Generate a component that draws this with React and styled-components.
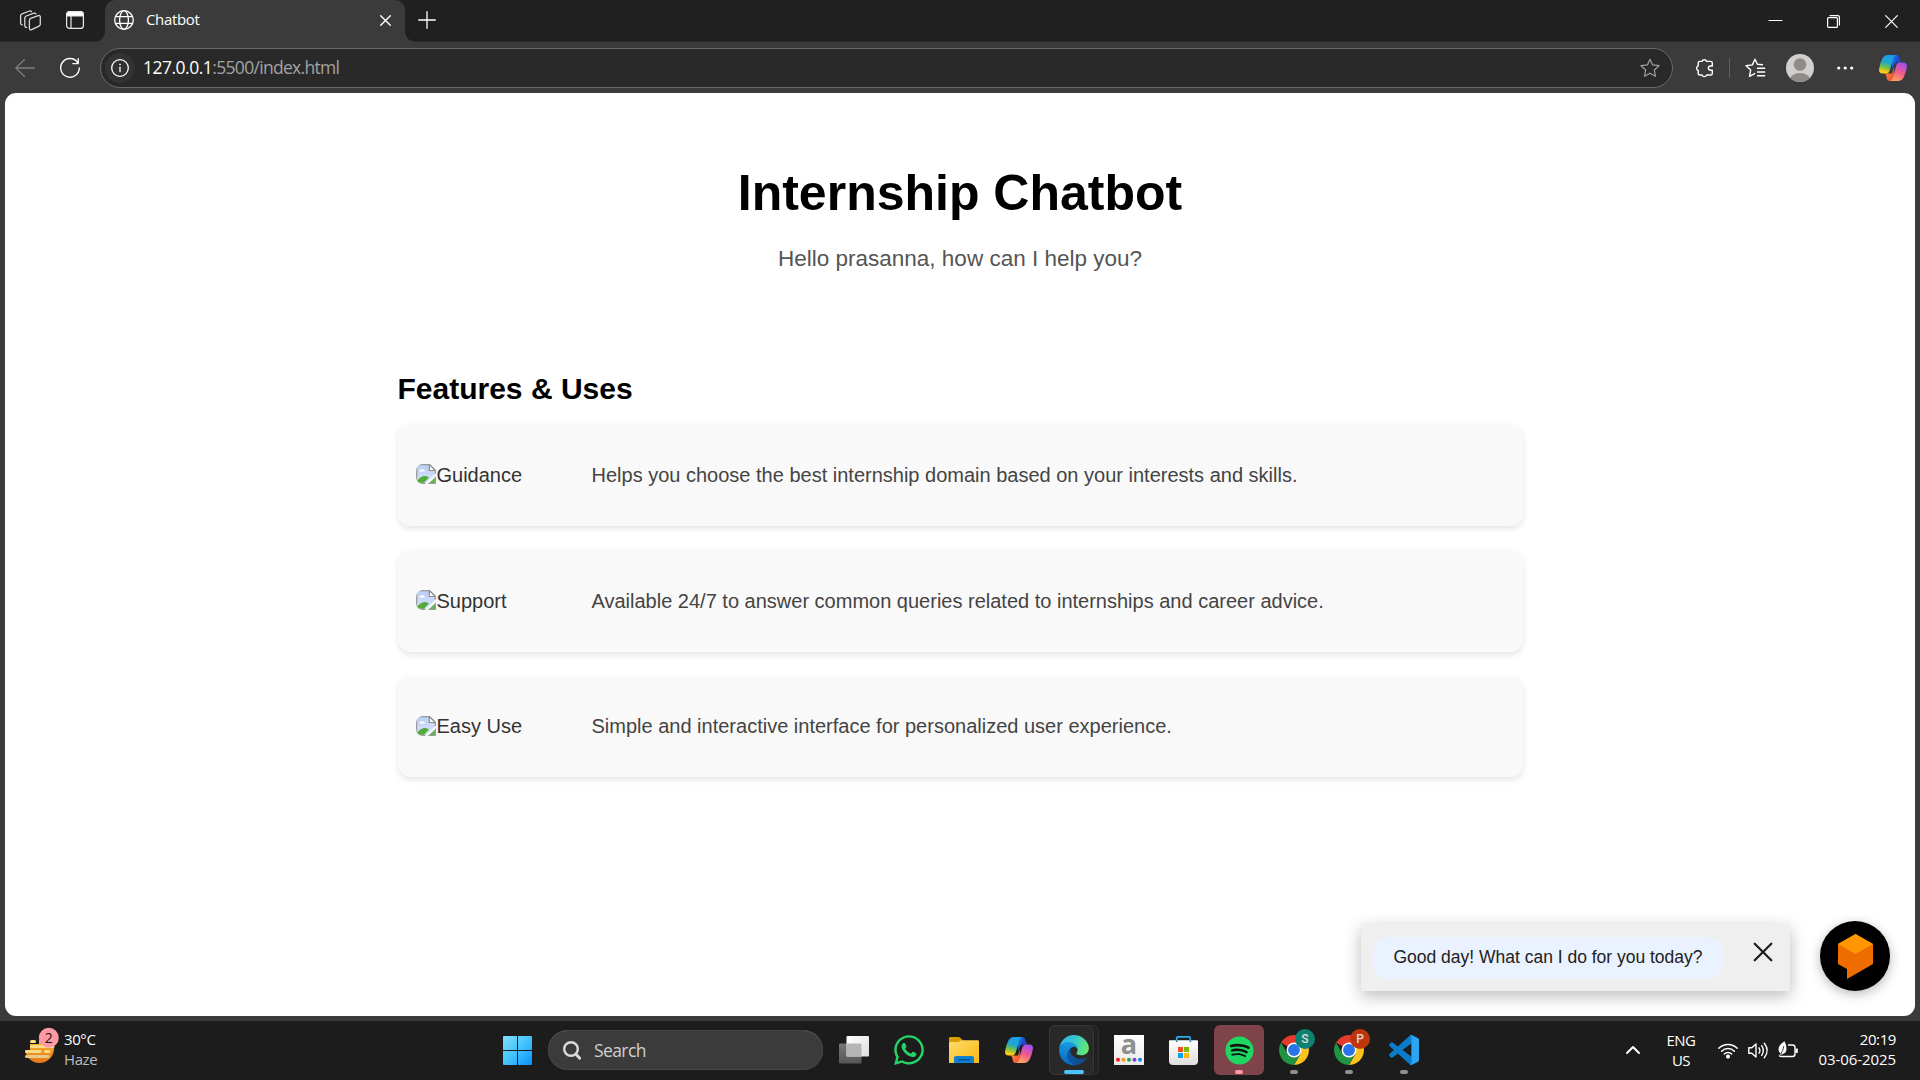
import React from 'react';
import styled, { createGlobalStyle } from 'styled-components';
import { FaWhatsapp, FaSpotify } from 'react-icons/fa';

const GlobalStyle = createGlobalStyle`
  * { box-sizing: border-box; }
  html, body { margin: 0; padding: 0; overflow: hidden; background: #3b3b3b; }
  svg { display: block; flex: none; overflow: visible; }
  h1, h2, p { margin: 0; }
`;

const arial = '"Liberation Sans", Arial, sans-serif';
const segoe = '"Open Sans", "Noto Sans", sans-serif';

const Screen = styled.div`
  width: 1920px;
  height: 1080px;
  display: flex;
  flex-direction: column;
  background: #3b3b3b;
  overflow: hidden;
`;

/* ---------- browser chrome ---------- */

const TabStrip = styled.header`
  height: 42px;
  flex: none;
  display: flex;
  background: #202020;
  box-shadow: inset 0 -1px 0 #2b2b2b;
`;

const StripTools = styled.div`
  width: 105px;
  display: flex;
  align-items: flex-start;
  gap: 25px;
  padding: 10px 0 0 20px;
`;

const Tab = styled.div`
  position: relative;
  width: 300px;
  height: 42px;
  display: flex;
  align-items: center;
  padding: 0 14px 2px 9px;
  background: #3b3b3b;
  border-radius: 10px 10px 0 0;

  &::before, &::after {
    content: '';
    position: absolute;
    bottom: 0;
    width: 10px;
    height: 10px;
  }
  &::before {
    left: -10px;
    background: radial-gradient(circle at 0 0, transparent 9.5px, #3b3b3b 10px);
  }
  &::after {
    right: -10px;
    background: radial-gradient(circle at 100% 0, transparent 9.5px, #3b3b3b 10px);
  }
`;

const TabTitle = styled.span`
  flex: 1;
  margin-left: 12px;
  padding-bottom: 2px;
  font: 400 15px/20px ${segoe};
  letter-spacing: -0.35px;
  color: #fff;
`;

const NewTab = styled.div`
  padding: 11px 0 0 13px;
`;

const WindowControls = styled.div`
  margin-left: auto;
  display: flex;
  gap: 45px;
  padding: 15px 22px 0 0;
`;

const Toolbar = styled.div`
  height: 51px;
  flex: none;
  display: flex;
  align-items: center;
  padding: 0 13px 0 15px;
`;

const NavButtons = styled.div`
  width: 85px;
  display: flex;
  gap: 25px;
`;

const AddressBar = styled.div`
  width: 1573px;
  height: 40px;
  display: flex;
  align-items: center;
  padding: 0 12px 0 4px;
  border: 1px solid #6a6a6a;
  border-radius: 20px;
  background: #292929;
`;

const SiteInfo = styled.div`
  width: 30px;
  height: 30px;
  display: grid;
  place-items: center;
  border-radius: 50%;
  background: #333;
`;

const Url = styled.span`
  flex: 1;
  margin-left: 8px;
  padding-bottom: 1px;
  font: 400 17.5px/24px ${segoe};
  letter-spacing: -0.7px;
  color: #a3a3a3;
  b { font-weight: 400; color: #fff; letter-spacing: -0.5px; }
`;

const ToolbarActions = styled.div`
  margin-left: auto;
  display: flex;
  align-items: center;
`;

const Divider = styled.i`
  width: 1px;
  height: 20px;
  margin: 0 15px 0 16px;
  background: #616161;
`;

/* ---------- page ---------- */

const Page = styled.main`
  position: relative;
  width: 1910px;
  height: 923px;
  flex: none;
  margin: 0 5px;
  background: #fff;
  border-radius: 11px;
  overflow: hidden;
  font-family: ${arial};
`;

const Hero = styled.section`
  display: flex;
  flex-direction: column;
  align-items: center;
  padding-top: 72px;
`;

const Title = styled.h1`
  font-size: 50px;
  line-height: 57px;
  color: #000;
`;

const Greeting = styled.p`
  margin-top: 24px;
  font-size: 22.5px;
  line-height: 26px;
  color: #555;
`;

const Features = styled.section`
  width: 1125px;
  margin: 100px auto 0;
`;

const FeaturesTitle = styled.h2`
  font-size: 30px;
  line-height: 34px;
  color: #000;
`;

const CardList = styled.div`
  display: flex;
  flex-direction: column;
  gap: 25px;
  margin-top: 19px;
`;

const Card = styled.article`
  height: 100.8px;
  display: flex;
  align-items: center;
  padding: 0 18.5px;
  background: #f9f9f9;
  border-radius: 12.5px;
  box-shadow: 0 2.5px 6.25px rgba(0, 0, 0, 0.1);
  font-size: 20px;
  line-height: 23px;
`;

const MissingImage = styled.div`
  width: 175.5px;
  display: flex;
  align-items: center;
  gap: 0.5px;
  color: #333;
  svg { margin-bottom: 2px; }
`;

const CardText = styled.p`
  color: #444;
`;

const ChatWidget = styled.aside`
  position: absolute;
  right: 25px;
  bottom: 25px;
  display: flex;
  align-items: flex-end;
  gap: 30px;
`;

const ChatPopup = styled.div`
  width: 429px;
  height: 67px;
  display: flex;
  padding: 13px 18px 12px 12px;
  background: #efefef;
  box-shadow: 0 5px 16px rgba(0, 0, 0, 0.27);
`;

const ChatMessage = styled.div`
  width: 350px;
  height: 42px;
  padding: 0 20.5px;
  border-radius: 15px;
  background: #eaf1ff;
  font-size: 17.5px;
  line-height: 40px;
  letter-spacing: -0.01px;
  white-space: nowrap;
  color: #212121;
`;

const ChatClose = styled.div`
  margin: 6px 0 0 auto;
`;

const ChatBubble = styled.div`
  width: 70px;
  height: 70px;
  border-radius: 50%;
  background: #000;
  box-shadow: 0 3px 12px rgba(0, 0, 0, 0.28);
`;

/* ---------- taskbar ---------- */

const Taskbar = styled.footer`
  height: 59px;
  flex: none;
  margin-top: 5px;
  padding-bottom: 1px;
  display: flex;
  align-items: center;
  background: #1c1c1c;
`;

const Weather = styled.div`
  width: 493px;
  height: 58px;
  display: flex;
  padding: 7px 0 0 25px;
  font: 400 15px/20px ${segoe};
  color: #fff;
`;

const WeatherIcon = styled.div`
  width: 39px;
`;

const WeatherText = styled.div`
  padding-top: 1px;
  letter-spacing: -0.4px;
  span { display: block; color: #bdbdbd; }
`;

const Apps = styled.div`
  display: flex;
  align-items: center;
  gap: 5px;
`;

const AppCell = styled.div`
  position: relative;
  width: 50px;
  height: 50px;
  display: grid;
  place-items: center;
  padding-right: ${p => (p.$nudge ? 1 : 0)}px;
  border-radius: 6px;
  background: ${p => p.$bg || 'transparent'};
  svg { grid-area: 1 / 1; position: relative; }

  &::after {
    content: '';
    display: ${p => (p.$bar ? 'block' : 'none')};
    position: absolute;
    bottom: 1px;
    left: 50%;
    width: ${p => p.$barWidth || 8}px;
    height: 4px;
    transform: translateX(-50%);
    border-radius: 2px;
    background: ${p => p.$bar};
  }
`;

const StackedCell = styled(AppCell)`
  box-shadow: inset 0 0 0 1px #303030;

  &::before {
    content: '';
    position: absolute;
    inset: 0 5px 0 0;
    border: 1px solid #383838;
    border-radius: 6px;
    background: #292929;
    box-shadow: 1px 0 0 #1c1c1c;
  }
`;

const SearchBox = styled.div`
  width: 275px;
  height: 40px;
  display: flex;
  align-items: center;
  gap: 13px;
  margin-right: 1px;
  padding-left: 15px;
  border-radius: 20px;
  background: #3b3b3b;
  box-shadow: inset 0 0 0 1px #464646, inset 0 1px 0 #5c5c5c;
`;

const SearchText = styled.span`
  padding-bottom: 1px;
  font: 400 17.5px/24px ${segoe};
  letter-spacing: -0.6px;
  color: #d0d0d0;
`;

const Badge = styled.span`
  position: absolute;
  left: 26px;
  top: 4px;
  width: 20px;
  height: 20px;
  border-radius: 50%;
  background: ${p => p.$bg};
  color: #e6d9d5;
  font: 500 12px/20px Roboto, sans-serif;
  text-align: center;
`;

const Tray = styled.div`
  margin-left: auto;
  display: flex;
  align-items: center;
  padding-right: 24px;
  font: 400 15px/20px ${segoe};
  letter-spacing: -0.5px;
  color: #fff;
`;

const Language = styled.div`
  width: 40px;
  margin: 0 17px 0 21px;
  text-align: center;
`;

const Status = styled.div`
  display: flex;
  gap: 10px;
`;

const Clock = styled.div`
  width: 98px;
  padding-bottom: 2px;
  text-align: right;
  white-space: nowrap;
  letter-spacing: -0.4px;
  span { display: block; letter-spacing: -0.08px; }
`;

/* ---------- icons ---------- */

const Line = ({ w, h = w, box, color = '#fff', sw = 1.3, children }) => (
  <svg width={w} height={h} viewBox={box || `0 0 ${w} ${h}`} fill="none" stroke={color}
    strokeWidth={sw} strokeLinecap="round" strokeLinejoin="round">{children}</svg>
);

const WorkspacesIcon = () => (
  <Line w={21} color="#d8d8d8" sw={1.3}>
    <path d="M10.6 8.4 18.3 5.6Q20.3 5.1 20.3 7V14.3Q20.2 15.6 19 16.1L11.6 19.6Q9.5 20.3 9.4 18.3V10.3Q9.5 8.9 10.6 8.4Z" />
    <path d="M6.7 17.4Q4.8 17.5 4.8 15.6V8.1Q4.9 6.6 6.2 6L13.9 3.1Q15.5 2.8 15.9 4" />
    <path d="M2.3 14.9Q.6 14.7.6 13V5.7Q.7 4.3 2 3.8L9.5 1Q10.9.6 11.5 1.7" />
  </Line>
);

const SideTabsIcon = () => (
  <Line w={18} h={20} sw={1.2} color="#e8e8e8">
    <rect x=".6" y="1.6" width="16.8" height="16.8" rx="3" />
    <path d="M.6 6V4.6a3 3 0 0 1 3-3h10.800a3 3 0 0 1 3 3V6Z" fill="#fff" />
    <path d="M5 6v12.400" />
  </Line>
);

const GlobeIcon = () => (
  <Line w={20} sw={1.3}>
    <circle cx="10" cy="10" r="9.300" />
    <ellipse cx="10" cy="10" rx="4.400" ry="9.300" />
    <path d="M1.600 6.700h16.800M1.600 13.300h16.800" />
  </Line>
);

const Cross = ({ s, sw, color }) => (
  <Line w={s} sw={sw} color={color}><path d={`M.7.7 ${s - 0.7} ${s - 0.7}M${s - 0.7} .7.7 ${s - 0.7}`} /></Line>
);

const StarPath = 'M10 1.200 12.600 6.900 19 7.700 14.300 12 15.500 18.300 10 15.200 4.500 18.300 5.700 12 1 7.700 7.400 6.900Z';

const CopilotIcon = ({ id, w = 28 }) => (
  <svg width={w} height={(w * 26) / 28} viewBox="0 0 28 26">
    <defs>
      <linearGradient id={`${id}a`} x1=".5" y1="0" x2=".25" y2="1">
        <stop offset="0" stopColor="#1b9df0" /><stop offset=".4" stopColor="#22a7c8" />
        <stop offset=".65" stopColor="#6fc04a" /><stop offset=".9" stopColor="#ffc91a" />
      </linearGradient>
      <linearGradient id={`${id}b`} x1=".7" y1="0" x2=".3" y2="1">
        <stop offset="0" stopColor="#a04df2" /><stop offset=".5" stopColor="#f0588f" />
        <stop offset="1" stopColor="#ffa85c" />
      </linearGradient>
      <linearGradient id={`${id}c`} x1="0" y1="0" x2="1" y2=".6">
        <stop offset="0" stopColor="#1a8ae8" /><stop offset=".6" stopColor="#1b46d2" /><stop offset="1" stopColor="#2560ea" />
      </linearGradient>
      <linearGradient id={`${id}d`} x1="0" y1="0" x2="1" y2="1">
        <stop offset="0" stopColor="#ff9d2c" /><stop offset="1" stopColor="#f0483c" />
      </linearGradient>
    </defs>
    <path d="M13 0H17Q19.600 0 20.400 3L21.200 6.200Q21.700 7.300 23 7.400H18Q15.500 7.400 14.600 10L13 14Z" fill={`url(#${id}c)`} />
    <path d="M8 18.500H13L15 12 14.500 22Q13.500 26 10.500 26Q8.400 26 7.800 23.500L7.200 20.500Q6.800 18.800 5 18.500Z" fill={`url(#${id}d)`} />
    <path d="M9 0H17Q15.200.3 14.400 3L10.700 15.500Q9.700 18.600 6.900 18.600H3.500Q-.6 18.400.2 13.500Q1 8 3.700 3Q5.500 0 9 0Z" fill={`url(#${id}a)`} />
    <path d="M19 26H10.800Q13 25.600 13.800 22.900L17.300 10.500Q18.300 7.400 21 7.400H24.500Q28.600 7.600 27.800 12.500Q27 18 24.300 23Q22.500 26 19 26Z" fill={`url(#${id}b)`} />
  </svg>
);

const BrokenImage = () => (
  <svg width="20" height="20" viewBox="0 0 20 20">
    <defs>
      <clipPath id="rounded"><rect width="20" height="20" rx="7" /></clipPath>
      <linearGradient id="sky" x2="0" y2="1"><stop stopColor="#b9cdf5" /><stop offset="1" stopColor="#dbe6fc" /></linearGradient>
    </defs>
    <g clipPath="url(#rounded)">
      <path d="M.6.6H13.500L19.400 6.400V19.400H.6Z" fill="url(#sky)" stroke="#9a9a9a" strokeWidth="1.300" />
      <path d="M3 7.500Q4 5 6 5.500Q8 4.500 9 7.500Z" fill="#fff" />
      <path d="M1.300 18.800V16.500Q5 11.800 9 12Q11.500 12 13 13.500L8 18.800Z" fill="#55ab3c" />
      <path d="M13.300.6V6.500H19.400Z" fill="#fff" stroke="#8d8d8d" strokeWidth="1.200" />
    </g>
    <path d="M8.800 20 20 9.300V12.200L12 20Z" fill="#f9f9f9" />
    <path d="M12.500 19.500H19.500V13.200Z" fill="#6fae5d" />
    <path d="M12.500 19.500H19.500V13.200" fill="none" stroke="#9a9a9a" />
  </svg>
);

const ChatLogo = () => (
  <svg width="70" height="70" viewBox="0 0 70 70">
    <path d="M18 23 35.500 13 53 23V43L27 58V48L18 43Z" fill="#ef6c00" />
    <path d="M18 23 35.500 13 53 23 35.500 33Z" fill="#ff9800" />
  </svg>
);

const HazeIcon = () => (
  <svg width="36" height="40" viewBox="0 0 36 40">
    <defs><linearGradient id="sun" x2="0" y2="1"><stop stopColor="#ffcb2e" /><stop offset="1" stopColor="#e8731a" /></linearGradient></defs>
    <circle cx="14.500" cy="20.500" r="14.500" fill="url(#sun)" />
    <path d="M-1 4H18V12H14V16H0V21H-1Z" fill="#1c1c1c" />
    <path d="M-1 12H5V22H-1Z" fill="#1c1c1c" />
    <g stroke="#f6dc87" strokeWidth="3" strokeLinecap="round">
      <path d="M6.500 13.500H9.500" stroke="#ffe27a" /><path d="M6.500 18.500H28" />
      <path d="M1.500 23.500H15M20.500 23.500H24" /><path d="M1.500 28.500H23" stroke="#e6c98b" />
    </g>
    <circle cx="23.800" cy="9.800" r="10" fill="#ff99a4" />
    <text x="23.800" y="14.800" fontFamily="Open Sans, sans-serif" fontSize="14" textAnchor="middle" fill="#111">2</text>
  </svg>
);

const StartIcon = () => (
  <svg width="29" height="29" viewBox="0 0 29 29">
    <defs><linearGradient id="win" gradientUnits="userSpaceOnUse" x1="0" y1="0" x2="29" y2="29">
      <stop stopColor="#84defc" /><stop offset=".5" stopColor="#43c3fb" /><stop offset="1" stopColor="#0b8ffb" />
    </linearGradient></defs>
    <g fill="url(#win)">
      <path d="M1 0H14V14H0V1Q0 0 1 0Z" /><path d="M15 0H28Q29 0 29 1V14H15Z" />
      <path d="M0 15H14V29H1Q0 29 0 28Z" /><path d="M15 15H29V28Q29 29 28 29H15Z" />
    </g>
  </svg>
);

const TaskViewIcon = () => (
  <svg width="30" height="28" viewBox="0 0 30 28">
    <defs>
      <linearGradient id="tv" x2="1" y2="1"><stop stopColor="#fff" /><stop offset="1" stopColor="#dedede" /></linearGradient>
      <linearGradient id="tv2" x2="0" y2="1"><stop stopColor="#777" /><stop offset="1" stopColor="#565656" /></linearGradient>
    </defs>
    <rect y="7.500" width="22.500" height="20" rx="1" fill="url(#tv2)" />
    <rect x="7.500" width="22.500" height="20.500" rx="1" fill="url(#tv)" />
    <rect x="7.500" y="7.500" width="15" height="13" fill="#b5b5b5" />
  </svg>
);

const FolderIcon = () => (
  <svg width="30" height="26" viewBox="0 0 30 26">
    <defs><linearGradient id="fold" x2="1" y2="1"><stop stopColor="#ffdc6b" /><stop offset="1" stopColor="#fbb714" /></linearGradient></defs>
    <path d="M0 1.200Q0 0 1.200 0H9.500Q10.500 0 11.200.8L13.500 3V8H0Z" fill="#dd9d05" />
    <path d="M0 6Q0 5 1 5H8.500Q10 5 11 4.200L12.500 3.200H28.800Q30 3.200 30 4.400V26H0Z" fill="url(#fold)" />
    <path d="M5 26V21Q5 19 7 19H23Q25 19 25 21V26Z" fill="#0f7fce" />
    <path d="M9 22.700H21" stroke="#064f8b" strokeWidth="1.300" />
  </svg>
);

const EdgeIcon = () => (
  <svg width="30" height="30" viewBox="4.600 0 256 259">
    <defs>
      <linearGradient id="e1" x1="0" x2="1"><stop stopColor="#0c59a4" /><stop offset="1" stopColor="#114a8b" /></linearGradient>
      <linearGradient id="e2" x1=".5" y1="0" x2=".3" y2="1"><stop stopColor="#1b9de2" /><stop offset=".5" stopColor="#1383d3" /><stop offset="1" stopColor="#0a67c0" /></linearGradient>
      <linearGradient id="e3" x1="0" y1=".3" x2="1" y2=".6"><stop stopColor="#35b5ee" /><stop offset=".45" stopColor="#36c6cf" /><stop offset="1" stopColor="#66eb6e" /></linearGradient>
    </defs>
    <path fill="url(#e1)" d="M235.680 195.460a93.730 93.730 0 0 1-10.540 4.710 101.870 101.870 0 0 1-35.900 6.460c-47.320 0-88.540-32.550-88.540-74.320A31.480 31.480 0 0 1 117.130 105c-42.800 1.800-53.800 46.400-53.800 72.530 0 73.880 68.090 81.370 82.760 81.370 7.910 0 19.840-2.300 27-4.560l1.310-.44a128.340 128.340 0 0 0 66.600-52.800 4 4 0 0 0-5.320-5.640z" />
    <path fill="url(#e2)" d="M110.340 246.340A79.200 79.200 0 0 1 87.600 225a80.720 80.720 0 0 1 29.530-120c3.120-1.470 8.450-4.130 15.540-4a32.350 32.350 0 0 1 25.690 13 31.880 31.880 0 0 1 6.360 18.660c0-.21 24.460-79.600-80-79.600-43.900 0-80 41.660-80 78.210a130.150 130.150 0 0 0 12.110 56 128 128 0 0 0 156.380 67.110 75.550 75.550 0 0 1-62.780-8z" />
    <path fill="url(#e3)" d="M156.940 153.780c-.81 1.050-3.300 2.500-3.300 5.660 0 2.610 1.700 5.120 4.720 7.230 14.380 10 41.490 8.680 41.560 8.680a59.560 59.560 0 0 0 30.270-8.350 61.380 61.380 0 0 0 30.430-52.880c.26-22.410-8-37.310-11.340-43.910C228.090 28.760 182.350.2 132.610.2a128 128 0 0 0-128 126.200c.48-36.540 36.800-66.050 80-66.050 3.500 0 23.460.34 42 10.070 16.340 8.580 24.900 18.940 30.850 29.210 6.180 10.670 7.280 24.150 7.280 29.520s-2.740 13.330-7.800 19.830z" />
  </svg>
);

const AmazonIcon = () => (
  <svg width="30" height="30" viewBox="0 0 30 30">
    <defs><linearGradient id="amz" x2="0" y2="1"><stop stopColor="#fff" /><stop offset="1" stopColor="#e9e9e9" /></linearGradient></defs>
    <rect width="30" height="30" fill="url(#amz)" />
    <text x="15" y="19" textAnchor="middle" fontFamily="Open Sans, sans-serif" fontWeight="700" fontSize="27" fill="#8e8e8e">a</text>
    {['#f0141e', '#f79c1c', '#20a45c', '#8f35d8', '#1585ea'].map((c, i) => (
      <circle key={c} cx={4 + i * 5.500} cy="24.700" r="2" fill={c} />
    ))}
  </svg>
);

const StoreIcon = () => (
  <svg width="29" height="29" viewBox="0 0 29 29">
    <defs><linearGradient id="bag" x2="0" y2="1"><stop stopColor="#fff" /><stop offset="1" stopColor="#dedede" /></linearGradient></defs>
    <path d="M7.700 6V2Q7.700.8 8.900.8H20.100Q21.300.8 21.300 2V6" fill="none" stroke="#29aee6" strokeWidth="1.700" />
    <path d="M1 4.300H28Q29 4.300 29 5.300V25Q29 29 25 29H4Q0 29 0 25V5.300Q0 4.300 1 4.300Z" fill="url(#bag)" />
    <path d="M7.700 4.300V6M21.300 4.300V6" stroke="#1b7fb5" strokeWidth="1.700" />
    <path d="M9 11H14V16H9Z" fill="#f25022" /><path d="M15 11H20V16H15Z" fill="#7fba00" />
    <path d="M9 17H14V22H9Z" fill="#00a4ef" /><path d="M15 17H20V22H15Z" fill="#ffb900" />
  </svg>
);

const ChromeIcon = () => (
  <svg width="30" height="30" viewBox="0 0 48 48">
    <path d="M24 24 3.220 12A24 24 0 0 1 44.780 12Z" fill="#e33b2e" />
    <path d="M24 12H44.780A24 24 0 0 1 24 48L34.400 30Z" fill="#fcc31e" />
    <path d="M3.220 12A24 24 0 0 0 24 48L34.400 30 24 32 13.600 30Z" fill="#229342" />
    <circle cx="24" cy="24" r="12" fill="#fff" />
    <circle cx="24" cy="24" r="9.500" fill="#2b73e8" />
  </svg>
);

const VsCodeIcon = () => (
  <svg width="30" height="30" viewBox="0 0 24 24">
    <path fill="#0a7cc9" d="M23.150 2.587 18.210.21a1.494 1.494 0 0 0-1.705.29l-9.460 8.630-4.120-3.128a.999.999 0 0 0-1.276.057L.327 7.261A1 1 0 0 0 .326 8.740L3.899 12 .326 15.260a1 1 0 0 0 .001 1.479L1.650 17.940a.999.999 0 0 0 1.276.057l4.120-3.128 9.460 8.630a1.492 1.492 0 0 0 1.704.29l4.942-2.377A1.500 1.500 0 0 0 24 20.060V3.939a1.500 1.500 0 0 0-.85-1.352zm-5.146 14.861L10.826 12l7.178-5.448v10.896z" />
    <path fill="#2ba4f2" d="M23.150 2.587 18.210.21a1.494 1.494 0 0 0-1.300 0Q18 .8 18 2V22Q18 23.200 16.900 23.790a1.492 1.492 0 0 0 1.310 0l4.942-2.377A1.500 1.500 0 0 0 24 20.060V3.939a1.500 1.500 0 0 0-.85-1.352z" />
  </svg>
);

const cards = [
  ['Guidance', 'Helps you choose the best internship domain based on your interests and skills.'],
  ['Support', 'Available 24/7 to answer common queries related to internships and career advice.'],
  ['Easy Use', 'Simple and interactive interface for personalized user experience.'],
];

const Gap = styled.i`
  width: ${p => p.$w}px;
  flex: none;
`;

export default function App() {
  return (
    <Screen>
      <GlobalStyle />
      <TabStrip>
        <StripTools><WorkspacesIcon /><SideTabsIcon /></StripTools>
        <Tab>
          <GlobeIcon />
          <TabTitle>Chatbot</TabTitle>
          <Cross s={11} sw={1.4} />
        </Tab>
        <NewTab><Line w={18} sw={1.3}><path d="M9 .7V17.300M.7 9H17.300" /></Line></NewTab>
        <WindowControls>
          <Line w={13} sw={1}><path d="M0 5.500H13" /></Line>
          <Line w={13} sw={1.2}><rect x=".6" y="2.600" width="9.800" height="9.800" rx="1" /><path d="M3 .6H10.900Q12.400.6 12.400 2.100V10" /></Line>
          <Cross s={13} sw={1.2} />
        </WindowControls>
      </TabStrip>

      <Toolbar>
        <NavButtons>
          <Line w={20} color="#7d7d7d" sw={1.3}><path d="M19.500 10H.8M9.500 1.500.8 10 9.500 18.500" /></Line>
          <Line w={20} sw={1.4}><path d="M17.600 4.500A9.300 9.300 0 1 0 19.300 10M18.200.6V5.600H12.800" /></Line>
        </NavButtons>
        <AddressBar>
          <SiteInfo>
            <Line w={18} sw={1.3}><circle cx="9" cy="9" r="8.300" /><path d="M9 8.200V12.600" /><circle cx="9" cy="5.500" r=".5" fill="#fff" stroke="#fff" strokeWidth=".6" /></Line>
          </SiteInfo>
          <Url><b>127.0.0.1</b>:5500/index.html</Url>
          <Line w={20} color="#a0a0a0" sw={1.2}><path d={StarPath} /></Line>
        </AddressBar>
        <ToolbarActions>
          <Line w={18} h={20} sw={1.4}>
            <path d="M7 3.400A2.400 2.400 0 0 1 11.600 3.400H15.600Q17.300 3.400 17.300 5.100V8H15.500A2.100 2.100 0 0 0 15.500 12.200H17.300V15.400Q17.300 17 15.600 17H11.700A2.500 2.500 0 0 1 7 17H4.800Q3.200 17 3.200 15.400V12.500A2.500 2.500 0 0 1 3.200 7.800V5.100Q3.200 3.400 4.800 3.400Z" />
          </Line>
          <Divider />
          <Line w={20} sw={1.4}>
            <path d="M17.500 6.800 12.400 6.300 10 1.200 7.400 6.900 1 7.700 5.700 12 4.500 18.300 9.600 15.600M12.500 10.200H19.700M12.500 14H19.700M12.500 17.800H19.700" />
          </Line>
          <Gap $w={21} />
          <svg width="28" height="28" viewBox="0 0 28 28">
            <defs><clipPath id="head"><circle cx="14" cy="14" r="14" /></clipPath></defs>
            <circle cx="14" cy="14" r="14" fill="#d2d0ce" />
            <g clipPath="url(#head)" fill="#8f8b87"><circle cx="14" cy="10.500" r="6.300" /><ellipse cx="14" cy="26.500" rx="10.500" ry="7.500" /></g>
          </svg>
          <Gap $w={23} />
          <svg width="16" height="4" fill="#fff"><circle cx="1.700" cy="2" r="1.600" /><circle cx="8.200" cy="2" r="1.600" /><circle cx="14.700" cy="2" r="1.600" /></svg>
          <Gap $w={26} />
          <CopilotIcon id="top" />
        </ToolbarActions>
      </Toolbar>

      <Page>
        <Hero>
          <Title>Internship Chatbot</Title>
          <Greeting>Hello prasanna, how can I help you?</Greeting>
        </Hero>
        <Features>
          <FeaturesTitle>Features &amp; Uses</FeaturesTitle>
          <CardList>
            {cards.map(([alt, text]) => (
              <Card key={alt}>
                <MissingImage><BrokenImage />{alt}</MissingImage>
                <CardText>{text}</CardText>
              </Card>
            ))}
          </CardList>
        </Features>
        <ChatWidget>
          <ChatPopup>
            <ChatMessage>Good day! What can I do for you today?</ChatMessage>
            <ChatClose><Cross s={18} sw={2.2} color="#1c1c1c" /></ChatClose>
          </ChatPopup>
          <ChatBubble><ChatLogo /></ChatBubble>
        </ChatWidget>
      </Page>

      <Taskbar>
        <Weather>
          <WeatherIcon><HazeIcon /></WeatherIcon>
          <WeatherText>30°C<span>Haze</span></WeatherText>
        </Weather>
        <Apps>
          <AppCell $nudge><StartIcon /></AppCell>
          <SearchBox>
            <Line w={18} h={19} sw={2.4} color="#dcdcdc"><circle cx="8" cy="8" r="6.800" /><path d="M13 13.200 16.700 17.300" strokeWidth="2.800" /></Line>
            <SearchText>Search</SearchText>
          </SearchBox>
          <AppCell><TaskViewIcon /></AppCell>
          <AppCell><FaWhatsapp size={34} color="#25d366" /></AppCell>
          <AppCell><FolderIcon /></AppCell>
          <AppCell><CopilotIcon id="task" /></AppCell>
          <StackedCell $bg="#232323" $bar="#4cc2ff" $barWidth={20}><EdgeIcon /></StackedCell>
          <AppCell><AmazonIcon /></AppCell>
          <AppCell $nudge><StoreIcon /></AppCell>
          <AppCell $bg="#7f444a" $bar="#ff99a4">
            <svg width="24" height="24"><circle cx="12" cy="12" r="12" fill="#111" /></svg>
            <FaSpotify size={29} color="#1ed760" />
          </AppCell>
          <AppCell $bar="#8f8f8f"><ChromeIcon /><Badge $bg="#0b8272">S</Badge></AppCell>
          <AppCell $bar="#8f8f8f"><ChromeIcon /><Badge $bg="#bf360c">P</Badge></AppCell>
          <AppCell $bar="#8f8f8f"><VsCodeIcon /></AppCell>
        </Apps>
        <Tray>
          <Line w={14} h={8} sw={2}><path d="M1 7 7 1 13 7" /></Line>
          <Language>ENG<br />US</Language>
          <Status>
            <Line w={20} h={17} sw={1.5}>
              <path d="M.8 6.200A13 13 0 0 1 19.200 6.200M3.600 9.200A9 9 0 0 1 16.400 9.200M6.300 12A5.200 5.200 0 0 1 13.700 12" />
              <circle cx="10" cy="14.600" r="1.300" fill="#fff" />
            </Line>
            <Line w={20} h={17} sw={1.4}>
              <path d="M.8 5.800H3.800L8 2V15L3.800 11.300H.8ZM11 5.800Q12.800 8.500 11 11.200M13.700 3.700Q17 8.500 13.700 13.300M16.300 1.200Q22 8.500 16.300 15.800" />
            </Line>
            <Line w={20} h={17} sw={1.4}>
              <path d="M10.500 3H14.500Q17 3 17 5.500V12Q17 14.500 14.500 14.500H4Q2.200 14.500 1.500 14M19 7V10.500" />
              <path d="M17.500 6.800H19.300V10.700H17.500Z" fill="#fff" stroke="none" />
              <path d="M6.500-.8Q.3 3 .5 7.500Q.6 10 2.800 11.500L1 13.500L4 12.200Q8.600 11.500 8.500 6.500Q8.400 2.500 6.500-.8Z" fill="#fff" stroke="none" />
              <path d="M3 11.800Q5.300 8.500 5.700 4.500" stroke="#1c1c1c" strokeWidth=".8" />
            </Line>
          </Status>
          <Clock>20:19<span>03-06-2025</span></Clock>
        </Tray>
      </Taskbar>
    </Screen>
  );
}
